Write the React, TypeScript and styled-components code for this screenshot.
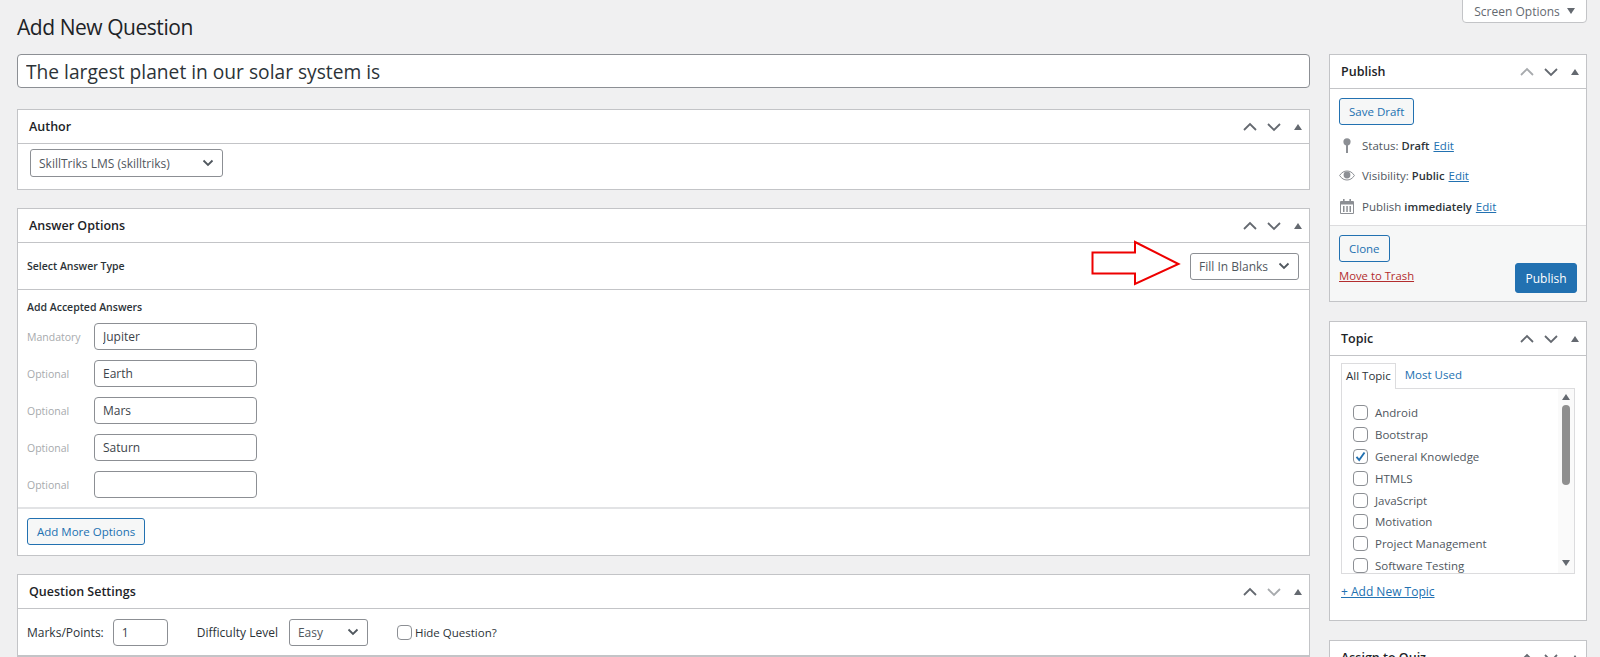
import React from "react";
import styled, { createGlobalStyle } from "styled-components";

const chevron = `url("data:image/svg+xml,%3Csvg xmlns='http://www.w3.org/2000/svg' width='16' height='16' viewBox='0 0 16 16'%3E%3Cpath d='M3.5 5.5 8 10l4.5-4.5' fill='none' stroke='%2350575e' stroke-width='1.8'/%3E%3C/svg%3E")`;

const GlobalStyle = createGlobalStyle`
  html, body {
    margin: 0;
    height: 657px;
    overflow: hidden;
    background: #f0f0f1;
    font-family: "Open Sans", "Noto Sans", sans-serif;
    color: #2c3338;
  }
`;

const Page = styled.div`
  height: 657px;
  box-sizing: border-box;
  overflow: hidden;
  padding: 0 13px 0 17px;
`;
const TopBar = styled.div`
  display: flex;
  justify-content: space-between;
  align-items: flex-start;
  height: 54px;
`;
const Title = styled.h1`
  margin: 12px 0 0;
  font-size: 21px;
  letter-spacing: -0.45px;
  line-height: 30px;
  font-weight: 400;
  color: #1d2327;
`;
const ScreenOptions = styled.div`
  width: 125px;
  height: 24px;
  box-sizing: border-box;
  margin-top: -1px;
  background: #fff;
  border: 1px solid #c3c4c7;
  border-radius: 0 0 4px 4px;
  display: flex;
  align-items: center;
  justify-content: center;
  gap: 7px;
  font-size: 12px;
  color: #646970;
`;
const Columns = styled.div`
  display: grid;
  grid-template-columns: 1293px 258px;
  column-gap: 19px;
  align-items: start;
`;
const Stack = styled.div`
  display: flex;
  flex-direction: column;
`;
const TitleInput = styled.input`
  box-sizing: border-box;
  width: 100%;
  height: 34px;
  margin-bottom: 21px;
  padding: 0 8px;
  background: #fff;
  border: 1px solid #8c8f94;
  border-radius: 4px;
  font: 400 19.2px "Open Sans", sans-serif;
  color: #2c3338;
`;
const Box = styled.section<{ $gap?: number }>`
  background: #fff;
  border: 1px solid #c3c4c7;
  margin-bottom: ${(p) => p.$gap ?? 18}px;
`;
const BoxHead = styled.header`
  height: 33px;
  display: flex;
  align-items: center;
  justify-content: space-between;
  padding: 0 7px 0 11px;
  border-bottom: 1px solid #c3c4c7;
`;
const BoxTitle = styled.h2`
  margin: 0;
  font-size: 12.5px;
  font-weight: 600;
  color: #1d2327;
`;
const HeadIcons = styled.div`
  display: flex;
  align-items: center;
  gap: 10px;
  svg:last-child {
    margin-left: 3px;
  }
`;
const AuthorBody = styled.div`
  padding: 5px 12px 12px;
`;
const Select = styled.select<{ $w: number; $h?: number }>`
  appearance: none;
  box-sizing: border-box;
  width: ${(p) => p.$w}px;
  height: ${(p) => p.$h ?? 27}px;
  padding: 0 24px 0 8px;
  background: #fff ${chevron} no-repeat right 6px center;
  border: 1px solid #8c8f94;
  border-radius: 3px;
  font: 400 12px "Open Sans", sans-serif;
  color: #50575e;
`;
const TypeRow = styled.div`
  height: 46px;
  display: flex;
  align-items: center;
  justify-content: space-between;
  padding: 0 10px 0 9px;
  border-bottom: 1px solid #c3c4c7;
`;
const Strong = styled.span`
  font-size: 10.5px;
  font-weight: 600;
  color: #2c3338;
`;
const TypeRight = styled.div`
  display: flex;
  align-items: center;
  gap: 9px;
  svg {
    margin-bottom: 6px;
  }
`;
const Answers = styled.div`
  display: flex;
  flex-direction: column;
  gap: 10px;
  padding: 10px 9px 9px;
  border-bottom: 2px solid #e2e3e5;
`;
const AcceptedLabel = styled(Strong)`
  line-height: 14px;
  margin-bottom: -1px;
`;
const AnswerRow = styled.div`
  display: grid;
  grid-template-columns: 67px 163px;
  align-items: center;
`;
const AnswerTag = styled.span`
  font-size: 10.5px;
  color: #a7aaad;
`;
const TextInput = styled.input<{ $w?: number }>`
  box-sizing: border-box;
  width: ${(p) => (p.$w ? `${p.$w}px` : "100%")};
  height: 27px;
  padding: 0 8px;
  background: #fff;
  border: 1px solid #8c8f94;
  border-radius: 4px;
  font: 400 12px "Open Sans", sans-serif;
  color: #3c434a;
`;
const MoreRow = styled.div`
  padding: 9px 9px 10px;
`;
const OutlineButton = styled.button`
  box-sizing: border-box;
  height: 27px;
  padding: 0 9px;
  background: #f6f7f7;
  border: 1px solid #2271b1;
  border-radius: 3px;
  font: 400 11.5px "Open Sans", sans-serif;
  color: #2271b1;
  white-space: nowrap;
`;
const SettingsRow = styled.div`
  height: 46px;
  display: flex;
  align-items: center;
  padding: 0 9px;
  border-bottom: 1px solid #c3c4c7;
`;
const SettingLabel = styled.span<{ $before?: number; $after: number }>`
  font-size: 12px;
  color: #2c3338;
  margin-left: ${(p) => p.$before ?? 0}px;
  margin-right: ${(p) => p.$after}px;
`;
const CheckBox = styled.span`
  box-sizing: border-box;
  width: 15px;
  height: 15px;
  flex: none;
  display: flex;
  align-items: center;
  justify-content: center;
  background: #fff;
  border: 1px solid #8c8f94;
  border-radius: 4px;
`;
const HideCheck = styled.label`
  display: flex;
  align-items: center;
  gap: 3px;
  margin-left: 29px;
  font-size: 11.5px;
  color: #2c3338;
`;
const PublishActions = styled.div`
  padding: 9px 9px 3.5px;
  border-bottom: 1px solid #dcdcde;
`;
const MetaRows = styled.div`
  margin-top: 5px;
  display: flex;
  flex-direction: column;
`;
const MetaRow = styled.div`
  height: 30.5px;
  display: flex;
  align-items: center;
  font-size: 11.5px;
  color: #50575e;
`;
const MetaIcon = styled.span`
  width: 16px;
  margin-right: 7px;
  display: flex;
  justify-content: center;
`;
const Bold = styled.b`
  font-size: 11.2px;
  font-weight: 600;
  color: #2c3338;
  margin-left: 3px;
`;
const Link = styled.a`
  margin-left: 4px;
  color: #2271b1;
  text-decoration: underline;
`;
const PublishFooter = styled.div`
  display: flex;
  justify-content: space-between;
  align-items: flex-end;
  padding: 9px 9px 8px;
  background: #f6f7f7;
`;
const FooterLeft = styled.div`
  display: flex;
  flex-direction: column;
  align-items: flex-start;
  gap: 6px;
  padding-bottom: 9px;
`;
const TrashLink = styled.a`
  font-size: 11.3px;
  line-height: 16px;
  color: #b32d2e;
  text-decoration: underline;
`;
const PrimaryButton = styled.button`
  box-sizing: border-box;
  width: 62px;
  height: 30px;
  background: #2271b1;
  border: 1px solid #2271b1;
  border-radius: 3px;
  color: #fff;
  font: 400 12px "Open Sans", sans-serif;
`;
const TopicBody = styled.div`
  height: 264px;
  box-sizing: border-box;
  padding: 7px 11px 0;
`;
const Tabs = styled.div`
  display: flex;
  height: 25px;
  font-size: 11.5px;
`;
const Tab = styled.div<{ $active?: boolean }>`
  box-sizing: border-box;
  display: flex;
  align-items: center;
  padding: 0 ${(p) => (p.$active ? "4px" : "9px")} 2px;
  height: ${(p) => (p.$active ? "26px" : "25px")};
  position: relative;
  z-index: 1;
  background: ${(p) => (p.$active ? "#fff" : "transparent")};
  border: ${(p) => (p.$active ? "1px solid #dcdcde" : "none")};
  border-bottom: none;
  color: ${(p) => (p.$active ? "#2c3338" : "#2271b1")};
`;
const TopicPanel = styled.div`
  position: relative;
  height: 186px;
  box-sizing: border-box;
  padding-top: 13px;
  overflow: hidden;
  border: 1px solid #dcdcde;
`;
const TopicRow = styled.label`
  height: 21.8px;
  display: flex;
  align-items: center;
  gap: 7px;
  padding-left: 11px;
  font-size: 11.5px;
  color: #50575e;
`;
const ScrollTrack = styled.div`
  position: absolute;
  top: 0;
  right: 0;
  bottom: 0;
  width: 16px;
  background: #fafafa;
  display: flex;
  flex-direction: column;
  align-items: center;
  justify-content: space-between;
  padding: 5px 0 7px;
  box-sizing: border-box;
`;
const ScrollThumb = styled.div`
  position: absolute;
  top: 16px;
  left: 4px;
  width: 8px;
  height: 80px;
  border-radius: 4px;
  background: #8f8f8f;
`;
const AddTopic = styled.a`
  display: block;
  margin-top: 9px;
  font-size: 12px;
  line-height: 18px;
  color: #2271b1;
  text-decoration: underline;
`;

const Move = ({ up, faded }: { up?: boolean; faded?: boolean }) => (
  <svg width="14" height="14" viewBox="0 0 14 14">
    <path
      d={up ? "M1 10l6-6 6 6" : "M1 4l6 6 6-6"}
      fill="none"
      stroke={faded ? "#a7aaad" : "#646970"}
      strokeWidth="1.8"
    />
  </svg>
);
const Tri = ({ down, size = 8 }: { down?: boolean; size?: number }) => (
  <svg width={size} height={size * 0.75} viewBox="0 0 8 6">
    <path d={down ? "M0 0h8L4 6z" : "M0 6h8L4 0z"} fill="#646970" />
  </svg>
);
const Controls = ({ fadedUp, fadedDown }: { fadedUp?: boolean; fadedDown?: boolean }) => (
  <HeadIcons>
    <Move up faded={fadedUp} />
    <Move faded={fadedDown} />
    <Tri />
  </HeadIcons>
);
const Check = () => (
  <svg width="13" height="13" viewBox="0 0 13 13">
    <path d="M2.5 6.8 5.2 10l5.3-7.5" fill="none" stroke="#2271b1" strokeWidth="1.9" />
  </svg>
);
const Pin = () => (
  <svg width="8" height="15" viewBox="0 0 8 15">
    <circle cx="4" cy="3.8" r="3.6" fill="#8c8f94" />
    <rect x="3" y="6" width="2" height="9" fill="#8c8f94" />
  </svg>
);
const Eye = () => (
  <svg width="16" height="11" viewBox="0 0 16 11">
    <path d="M.6 5.5C2.700 2.300 5.100 1 8 1s5.300 1.300 7.400 4.500C13.300 8.700 10.900 10 8 10S2.700 8.700.6 5.500z" fill="none" stroke="#8c8f94" />
    <circle cx="8" cy="5" r="3.400" fill="#8c8f94" />
  </svg>
);
const Calendar = () => (
  <svg width="14" height="15" viewBox="0 0 14 15">
    <path d="M.5 2.500h13v12H.5z" fill="none" stroke="#8c8f94" />
    <path d="M1 3h12v2.500H1z" fill="#8c8f94" />
    <path d="M3 0h1.600v3H3zM9.400 0H11v3H9.400zM3 7h1.500v6H3zM6.300 7h1.500v6H6.300zM9.500 7H11v6H9.500z" fill="#8c8f94" />
  </svg>
);
const RedArrow = () => (
  <svg width="90" height="46" viewBox="0 0 90 46">
    <path d="M1.500 12.500H44V2l43.500 22L44 44V33.500H1.500z" fill="#fff" stroke="#ee0000" strokeWidth="2" />
  </svg>
);

const answers = [
  { tag: "Mandatory", value: "Jupiter" },
  { tag: "Optional", value: "Earth" },
  { tag: "Optional", value: "Mars" },
  { tag: "Optional", value: "Saturn" },
  { tag: "Optional", value: "" },
];
const topics = [
  "Android",
  "Bootstrap",
  "General Knowledge",
  "HTMLS",
  "JavaScript",
  "Motivation",
  "Project Management",
  "Software Testing",
];

export default function App() {
  return (
    <Page>
      <GlobalStyle />
      <TopBar>
        <Title>Add New Question</Title>
        <ScreenOptions>
          Screen Options <Tri down />
        </ScreenOptions>
      </TopBar>
      <Columns>
        <Stack>
          <TitleInput readOnly value="The largest planet in our solar system is" />
          <Box>
            <BoxHead>
              <BoxTitle>Author</BoxTitle>
              <Controls />
            </BoxHead>
            <AuthorBody>
              <Select $w={193} $h={28}>
                <option>SkillTriks LMS (skilltriks)</option>
              </Select>
            </AuthorBody>
          </Box>
          <Box>
            <BoxHead>
              <BoxTitle>Answer Options</BoxTitle>
              <Controls />
            </BoxHead>
            <TypeRow>
              <Strong>Select Answer Type</Strong>
              <TypeRight>
                <RedArrow />
                <Select $w={109}>
                  <option>Fill In Blanks</option>
                </Select>
              </TypeRight>
            </TypeRow>
            <Answers>
              <AcceptedLabel>Add Accepted Answers</AcceptedLabel>
              {answers.map((a, i) => (
                <AnswerRow key={i}>
                  <AnswerTag>{a.tag}</AnswerTag>
                  <TextInput readOnly value={a.value} />
                </AnswerRow>
              ))}
            </Answers>
            <MoreRow>
              <OutlineButton>Add More Options</OutlineButton>
            </MoreRow>
          </Box>
          <Box>
            <BoxHead>
              <BoxTitle>Question Settings</BoxTitle>
              <Controls fadedDown />
            </BoxHead>
            <SettingsRow>
              <SettingLabel $after={9}>Marks/Points:</SettingLabel>
              <TextInput $w={55} readOnly value="1" />
              <SettingLabel $before={29} $after={11}>
                Difficulty Level
              </SettingLabel>
              <Select $w={79}>
                <option>Easy</option>
              </Select>
              <HideCheck>
                <CheckBox />
                Hide Question?
              </HideCheck>
            </SettingsRow>
          </Box>
        </Stack>
        <Stack>
          <Box $gap={19}>
            <BoxHead>
              <BoxTitle>Publish</BoxTitle>
              <Controls fadedUp />
            </BoxHead>
            <PublishActions>
              <OutlineButton>Save Draft</OutlineButton>
              <MetaRows>
                <MetaRow>
                  <MetaIcon>
                    <Pin />
                  </MetaIcon>
                  Status:<Bold>Draft</Bold>
                  <Link>Edit</Link>
                </MetaRow>
                <MetaRow>
                  <MetaIcon>
                    <Eye />
                  </MetaIcon>
                  Visibility:<Bold>Public</Bold>
                  <Link>Edit</Link>
                </MetaRow>
                <MetaRow>
                  <MetaIcon>
                    <Calendar />
                  </MetaIcon>
                  Publish<Bold>immediately</Bold>
                  <Link>Edit</Link>
                </MetaRow>
              </MetaRows>
            </PublishActions>
            <PublishFooter>
              <FooterLeft>
                <OutlineButton>Clone</OutlineButton>
                <TrashLink>Move to Trash</TrashLink>
              </FooterLeft>
              <PrimaryButton>Publish</PrimaryButton>
            </PublishFooter>
          </Box>
          <Box $gap={19}>
            <BoxHead>
              <BoxTitle>Topic</BoxTitle>
              <Controls />
            </BoxHead>
            <TopicBody>
              <Tabs>
                <Tab $active>All Topic</Tab>
                <Tab>Most Used</Tab>
              </Tabs>
              <TopicPanel>
                {topics.map((t) => (
                  <TopicRow key={t}>
                    <CheckBox>{t === "General Knowledge" && <Check />}</CheckBox>
                    {t}
                  </TopicRow>
                ))}
                <ScrollTrack>
                  <Tri />
                  <ScrollThumb />
                  <Tri down />
                </ScrollTrack>
              </TopicPanel>
              <AddTopic>+ Add New Topic</AddTopic>
            </TopicBody>
          </Box>
          <Box>
            <BoxHead>
              <BoxTitle>Assign to Quiz</BoxTitle>
              <Controls />
            </BoxHead>
          </Box>
        </Stack>
      </Columns>
    </Page>
  );
}
